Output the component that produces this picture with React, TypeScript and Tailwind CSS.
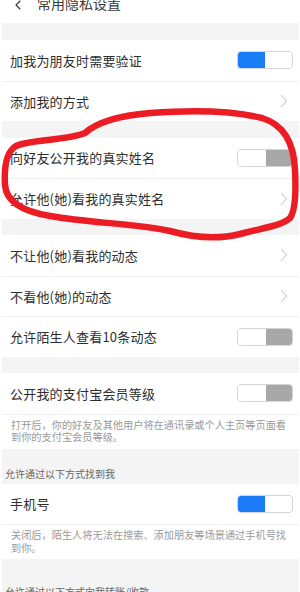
import { ChevronLeft } from 'lucide-react'

type Row = { label: string; kind: 'on' | 'off' | 'link' }

function Toggle({ on }: { on: boolean }) {
  return (
    <div className="flex h-[18px] w-[56px] overflow-hidden rounded-[4px] border border-[#d4d4d4]">
      {on ? (
        <>
          <div className="w-[27px] bg-[#1a7cf7]" />
          <div className="flex-1 rounded-[3px] bg-white" />
        </>
      ) : (
        <>
          <div className="w-[28px] rounded-[3px] bg-white" />
          <div className="flex-1 bg-[#a8a8a8]" />
        </>
      )}
    </div>
  )
}

function Chevron() {
  return (
    <svg width="8" height="14" viewBox="0 0 8 14" className="mr-[5px]">
      <path d="M1.5 1.5 L6.5 7 L1.5 12.5" fill="none" stroke="#c8c8c8" strokeWidth="1.1" strokeLinecap="round" strokeLinejoin="round" />
    </svg>
  )
}

function Group({ rows }: { rows: Row[] }) {
  return (
    <div className="bg-white">
      {rows.map((r, i) => (
        <div key={r.label} className="flex h-[40.5px] items-center justify-between pl-[8px] pr-[6px]"
          style={{ borderTop: i > 0 ? '1px solid #f0f0f0' : 'none' }}>
          <span className="text-[13px] tracking-[0.2px] text-[#2e2e2e]">{r.label}</span>
          {r.kind === 'link' ? <Chevron /> : <Toggle on={r.kind === 'on'} />}
        </div>
      ))}
    </div>
  )
}

function Note({ lines }: { lines: string[] }) {
  return (
    <div className="bg-white pb-[5px] pl-[9px] pt-[4px] text-[10.2px] leading-[12.5px] text-[#9a9a9a]"
      style={{ borderTop: '1px solid #f0f0f0' }}>
      {lines.map(l => <div key={l} className="whitespace-nowrap">{l}</div>)}
    </div>
  )
}

export default function App() {
  return (
    <div className="relative h-[592px] w-[300px] overflow-hidden bg-white pl-[2px] pr-[1px]"
      style={{ fontFamily: '"Noto Sans CJK SC", "Noto Sans", sans-serif' }}>
      <div className="flex h-[23px] items-start bg-white">
        <ChevronLeft size={16} strokeWidth={1.6} className="ml-[8px] mt-[-3px] text-[#333]" />
        <span className="ml-[11px] mt-[-7px] text-[14px] leading-[20px] text-[#3a3a3a]">常用隐私设置</span>
      </div>

      <div className="bg-[#f4f4f4]">
        <div className="h-[17px]" />
        <Group rows={[{ label: '加我为朋友时需要验证', kind: 'on' }, { label: '添加我的方式', kind: 'link' }]} />
        <div className="h-[16.5px]" />
        <Group rows={[{ label: '向好友公开我的真实姓名', kind: 'off' }, { label: '允许他(她)看我的真实姓名', kind: 'link' }]} />
        <div className="h-[16.5px]" />
        <Group rows={[
          { label: '不让他(她)看我的动态', kind: 'link' },
          { label: '不看他(她)的动态', kind: 'link' },
          { label: '允许陌生人查看10条动态', kind: 'off' },
        ]} />
        <div className="h-[16.5px]" />
        <Group rows={[{ label: '公开我的支付宝会员等级', kind: 'off' }]} />
        <Note lines={['打开后，你的好友及其他用户将在通讯录或个人主页等页面看', '到你的支付宝会员等级。']} />
        <div className="flex h-[35px] items-end pb-[3px] pl-[3px] text-[10px] text-[#666]">允许通过以下方式找到我</div>
        <Group rows={[{ label: '手机号', kind: 'on' }]} />
        <Note lines={['关闭后，陌生人将无法在搜索、添加朋友等场景通过手机号找', '到你。']} />
        <div className="flex h-[40px] items-end pl-[3px] text-[10px] leading-[14px] text-[#666]">允许通过以下方式向我转账/收款</div>
      </div>

      {/* hand-drawn red loop over the screenshot */}
      <svg className="pointer-events-none absolute left-0 top-0" width="300" height="592" viewBox="0 0 300 592">
        <path
          d="M85 133 C95 124 115 116 150 113 C190 110 230 110 262 118 C285 125 294 145 295 170 C296 190 296 210 290 218 C282 226 262 228 240 234 C220 239 195 238 170 231 C140 224 90 223 50 216 C20 211 6 200 5 185 C4 168 6 152 16 146 C30 139 65 141 85 133 Z"
          fill="none" stroke="#ec1c24" strokeWidth="6.5" strokeLinejoin="round" />
      </svg>
    </div>
  )
}
